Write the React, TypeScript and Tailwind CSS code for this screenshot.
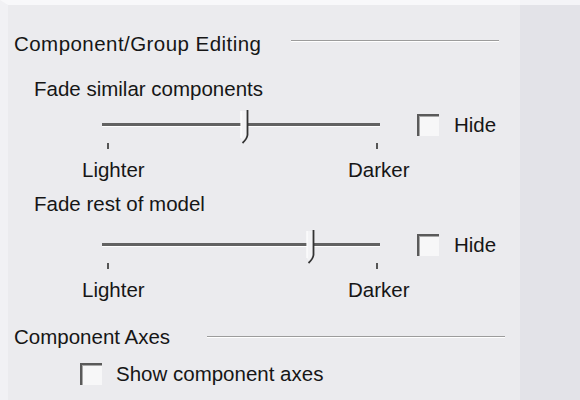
import React from "react";

const Thumb = () => (
  <svg width="12" height="34" viewBox="0 0 12 34" className="block">
    <polygon points="2,1 8,1 8,24 4,31 2,29" fill="#f3f3f5" />
    <path d="M2,1 L2,28" stroke="#ffffff" strokeWidth="1.2" fill="none" />
    <path d="M8.5,0 L8.5,25 Q8,29 3.5,33" stroke="#333333" strokeWidth="1.8" fill="none" />
  </svg>
);

const Checkbox = () => (
  <div className="w-[22px] h-[22px] border-t-2 border-l-2 border-[#5a5a5a] bg-[#f7f7f8] shadow-[inset_1px_1px_0_#a8a8a8]" />
);

const Slider = ({ pos }: { pos: number }) => {
  return (
    <div className="flex flex-col">
      <div className="flex items-center h-[30px]">
        <div className="relative w-[278px] ml-[88px] h-[4px] bg-[#626262] border-b border-white">
          <div className="absolute top-[-13px]" style={{ left: pos }}>
            <Thumb />
          </div>
        </div>
        <div className="ml-[37px]">
          <Checkbox />
        </div>
        <span className="ml-[15px]">Hide</span>
      </div>
      <div className="flex mt-[3px] h-[6px] ml-[93px]">
        <div className="w-[2px] h-[6px] bg-[#555]" />
        <div className="w-[2px] h-[6px] bg-[#555] ml-[267px]" />
      </div>
    </div>
  );
};

const Scale = () => (
  <div className="flex h-[24px] items-center ml-[68px]">
    <span className="w-[266px]">Lighter</span>
    <span>Darker</span>
  </div>
);

const Etched = ({ w }: { w: string }) => (
  <div className={`${w} h-[2px] border-t border-[#9c9c9c] border-b border-b-white`} />
);

export default function App() {
  return (
    <div
      className="w-[580px] h-[400px] flex bg-[#e3e3e8] text-[#161616] text-[20.5px] leading-[24px] overflow-hidden"
      style={{ fontFamily: '"Liberation Sans", Arial, sans-serif' }}
    >
      <div className="w-[520px] h-full flex flex-col bg-[#ebebee] border-t-[5px] border-t-[#f8f8fa] border-l-[8px] border-l-[#f1f1f4] pl-[6px]">
        {/* Component/Group Editing */}
        <div className="flex items-center h-[24px] mt-[27px]">
          <span className="tracking-[0.45px]">Component/Group Editing</span>
          <div className="ml-[30px] mt-[-6px]">
            <Etched w="w-[208px]" />
          </div>
        </div>

        <div className="h-[24px] mt-[21px] ml-[20px]">Fade similar components</div>
        <div className="mt-[9px]">
          <Slider pos={137} />
        </div>
        <div className="mt-[9px]">
          <Scale />
        </div>

        <div className="h-[24px] mt-[10px] ml-[20px]">Fade rest of model</div>
        <div className="mt-[14px]">
          <Slider pos={203} />
        </div>
        <div className="mt-[9px]">
          <Scale />
        </div>

        {/* Component Axes */}
        <div className="flex items-center h-[24px] mt-[23px]">
          <span>Component Axes</span>
          <div className="ml-[37px]">
            <Etched w="w-[298px]" />
          </div>
        </div>
        <div className="flex items-center h-[24px] mt-[13px] ml-[66px]">
          <Checkbox />
          <span className="ml-[14px]">Show component axes</span>
        </div>
      </div>
      <div className="flex-1 h-full border-t-[5px] border-t-[#f4f4f7]" />
    </div>
  );
}
